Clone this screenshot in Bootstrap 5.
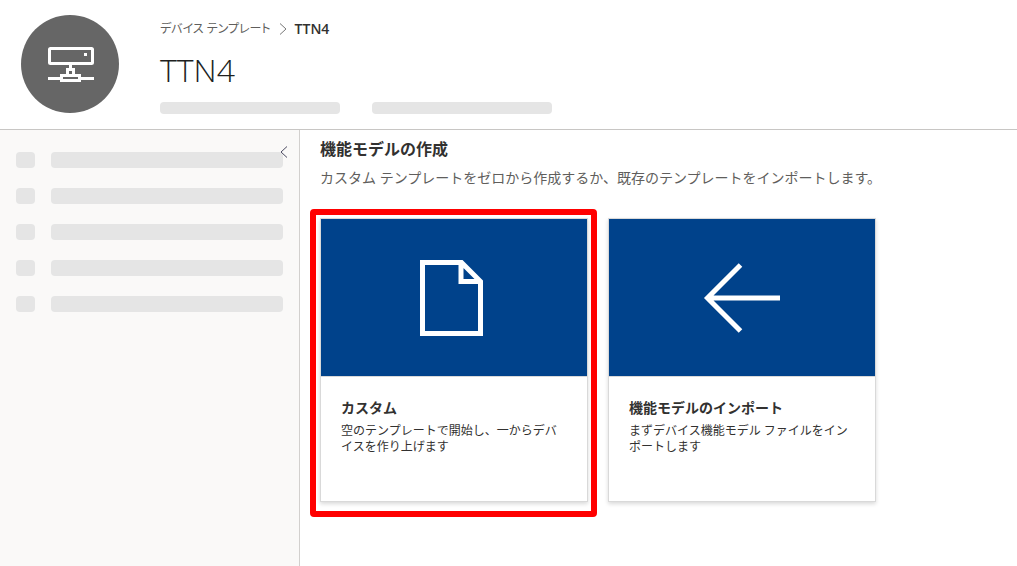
<!DOCTYPE html>
<html lang="ja">
<head>
<meta charset="utf-8">
<meta name="viewport" content="width=device-width, initial-scale=1">
<title>TTN4 - デバイス テンプレート</title>
<link href="https://cdn.jsdelivr.net/npm/bootstrap@5.3.0/dist/css/bootstrap.min.css" rel="stylesheet">
<style>
  body { font-family: "Open Sans", "Noto Sans CJK JP", sans-serif; font-size: 14px; line-height: 20px; color: #323130; background: #fff; }
  .page-head { border-bottom: 1px solid #c8c6c4; padding: 15px 21px; gap: 41px; }
  .avatar { width: 98px; height: 98px; background: #666; }
  .crumbs { gap: 8px; margin-top: 4px; }
  .crumbs a { font-size: 12px; font-feature-settings: "palt"; color: #605e5c; }
  .page-title { font-size: 32px; line-height: 40px; font-weight: 350; color: #201f1e; margin: 11px 0 12px; }
  .bone { background: #e5e5e5; border-radius: 4px; }
  .bone-row { gap: 32px; }
  .bone-sub { width: 180px; height: 12px; }
  .bone-icon { width: 19px; height: 16px; }
  .bone-line { height: 16px; }
  .side { width: 300px; background: #faf9f8; border-right: 1px solid #d2d0ce; padding: 22px 16px; }
  .side ul { gap: 20px; }
  .side li { gap: 16px; }
  .collapse-btn { top: 14px; right: 9px; width: 12px; height: 16px; }
  .content { padding: 8px 20px; }
  .content h1 { font-size: 16px; line-height: 22px; font-weight: 700; margin: 0 0 8px; }
  .intro { color: #605e5c; margin: 0 0 30px; }
  .tiles { gap: 20px; }
  .tile { width: 268px; min-height: 284px; background: #fff; border: 1px solid #d9d9d9; box-shadow: 0 2px 4px rgba(0,0,0,.15); color: #323130; }
  .tile-art { height: 158px; background: #00428b; border-bottom: 1px solid #d9d9d9; }
  .tile-text { padding: 21px 20px; }
  .tile-title { font-weight: 700; margin-bottom: 5px; }
  .tile-desc { font-size: 12px; line-height: 16px; }
  .picked::after { content: ""; position: absolute; inset: -10px -10px -16px -11px; border: 6px solid #f00; border-radius: 4px; pointer-events: none; }
</style>
</head>
<body class="d-flex flex-column min-vh-100">
<header class="page-head d-flex">
  <div class="avatar rounded-circle flex-shrink-0 d-flex align-items-center justify-content-center">
    <svg width="48" height="40" viewBox="-2 -2 48 40" fill="none" stroke="#fff" stroke-width="3" aria-hidden="true">
      <rect x="1.5" y="2.500" width="43" height="15" rx="1"/>
      <rect x="36" y="7" width="3" height="3" fill="#fff" stroke="none"/>
      <path d="M22.500 18V23M19.500 30V23.500H25.500V30M13.500 29.500H31.500V34.500H13.500ZM0 32.500H13M32 32.500H46"/>
    </svg>
  </div>
  <div class="flex-grow-1">
    <nav class="crumbs d-flex align-items-center" aria-label="階層">
      <a href="#" class="text-decoration-none">デバイス テンプレート</a>
      <svg width="8" height="12" viewBox="0 0 8 12" fill="none" stroke="#777" aria-hidden="true"><path d="M1 .5 7 6 1 11.500"/></svg>
      <span class="fw-semibold" aria-current="page">TTN4</span>
    </nav>
    <h2 class="page-title">TTN4</h2>
    <div class="bone-row d-flex">
      <div class="bone bone-sub"></div>
      <div class="bone bone-sub"></div>
    </div>
  </div>
</header>
<div class="d-flex flex-grow-1">
  <aside class="side flex-shrink-0 position-relative">
    <ul class="list-unstyled d-flex flex-column mb-0">
      <li class="d-flex"><div class="bone bone-icon"></div><div class="bone bone-line flex-grow-1"></div></li>
      <li class="d-flex"><div class="bone bone-icon"></div><div class="bone bone-line flex-grow-1"></div></li>
      <li class="d-flex"><div class="bone bone-icon"></div><div class="bone bone-line flex-grow-1"></div></li>
      <li class="d-flex"><div class="bone bone-icon"></div><div class="bone bone-line flex-grow-1"></div></li>
      <li class="d-flex"><div class="bone bone-icon"></div><div class="bone bone-line flex-grow-1"></div></li>
    </ul>
    <button type="button" class="collapse-btn position-absolute border-0 bg-transparent p-0 d-flex align-items-center justify-content-center" aria-label="折りたたむ">
      <svg width="8" height="12" viewBox="0 0 8 12" fill="none" stroke="#4b4a60" aria-hidden="true"><path d="M7 .5 1 6 7 11.500"/></svg>
    </button>
  </aside>
  <main class="content flex-grow-1">
    <h1>機能モデルの作成</h1>
    <p class="intro">カスタム テンプレートをゼロから作成するか、既存のテンプレートをインポートします。</p>
    <div class="tiles d-flex flex-wrap">
      <button type="button" class="tile picked position-relative p-0 text-start d-flex flex-column">
        <span class="tile-art w-100 d-flex align-items-center justify-content-center">
          <svg width="68" height="76" viewBox="0 0 68 76" fill="none" stroke="#fff" stroke-width="5" aria-hidden="true"><path d="M2.500 2.500H41.500L60.500 21.500V73.500H2.500ZM41 2.500V21.500H61"/></svg>
        </span>
        <span class="tile-text d-block">
          <span class="tile-title d-block">カスタム</span>
          <span class="tile-desc d-block">空のテンプレートで開始し、一からデバイスを作り上げます</span>
        </span>
      </button>
      <button type="button" class="tile p-0 text-start d-flex flex-column">
        <span class="tile-art w-100 d-flex align-items-center justify-content-center">
          <svg width="78" height="72" viewBox="0 0 78 72" fill="none" stroke="#fff" stroke-width="5" aria-hidden="true"><path d="M37.500 3 4.500 36 37.500 69M5 36H77"/></svg>
        </span>
        <span class="tile-text d-block">
          <span class="tile-title d-block">機能モデルのインポート</span>
          <span class="tile-desc d-block">まずデバイス機能モデル ファイルをインポートします</span>
        </span>
      </button>
    </div>
  </main>
</div>
<script src="https://cdn.jsdelivr.net/npm/bootstrap@5.3.0/dist/js/bootstrap.bundle.min.js"></script>
</body>
</html>
